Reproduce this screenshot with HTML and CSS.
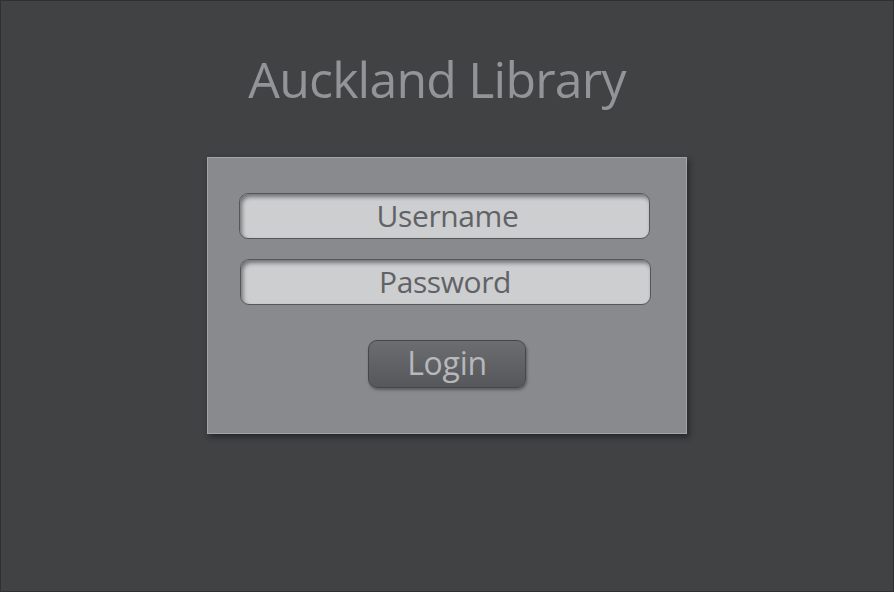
FILE: index.html
```html
<!DOCTYPE html>
<html>
<head>
<meta charset="utf-8">
<link rel="stylesheet" href="styles.css">
</head>
<body>
<div class="page">
  <h1 class="title">Auckland Library</h1>
  <form class="panel">
    <div class="field field-user">Username</div>
    <div class="field field-pass">Password</div>
    <div class="actions"><button type="button" class="login">Login</button></div>
  </form>
</div>
</body>
</html>
```
FILE: styles.css
```css
html, body { margin: 0; padding: 0; }
body { width: 894px; height: 592px; overflow: hidden; background: #414244; font-family: "Open Sans", "Noto Sans", sans-serif; }
.page { box-sizing: border-box; width: 894px; height: 592px; border: 1px solid #2f3032; display: flex; flex-direction: column; align-items: center; }
.title { margin: 44px 0 0 -20px; font-weight: 400; font-size: 50px; line-height: 68px; color: #939497; letter-spacing: -0.8px; }
.panel { box-sizing: border-box; width: 480px; height: 277px; margin: 44px 0 0 -1px; background: #898a8e; border: 1px solid #a3a4a7; box-shadow: 2px 3px 6px rgba(0,0,0,0.45); display: flex; flex-direction: column; padding: 35px 0 0 31px; }
.field { box-sizing: border-box; width: 411px; height: 46px; border: 1px solid #55565a; border-radius: 9px; background: #cdced0; box-shadow: inset 2px 3px 4px rgba(0,0,0,0.45); display: flex; align-items: center; justify-content: center; font-size: 30px; color: #616266; letter-spacing: -0.4px; padding: 0 0 2px 7px; }
.field-pass { margin-top: 20px; margin-left: 1px; padding-left: 0; }
.actions { display: flex; justify-content: center; margin-top: 35px; padding-right: 30px; }
.login { box-sizing: border-box; width: 158px; height: 48px; border: 1px solid #46474a; border-radius: 9px; background: linear-gradient(#6c6d70, #56575a); box-shadow: 1px 2px 3px rgba(0,0,0,0.35); font-family: "Open Sans", "Noto Sans", sans-serif; font-size: 32px; color: #b7b8bb; letter-spacing: -0.3px; padding: 0 0 3px 0; line-height: 1; }
```
